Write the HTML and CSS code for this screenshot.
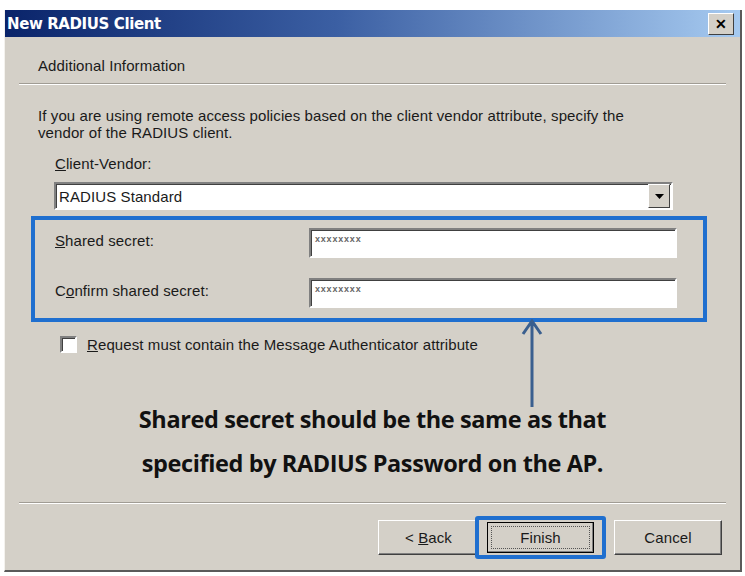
FILE: index.html
```html
<!DOCTYPE html>
<html lang="en">
<head>
    <meta charset="UTF-8">
    <title>New RADIUS Client</title>
    <link rel="stylesheet" href="styles.css">
</head>
<body>

<div class="window">
    <!-- title bar -->
    <div class="titlebar">
        <span class="title">New RADIUS Client</span>
        <span class="close-btn">&#x2715;</span>
    </div>

    <div class="page-head">
        <span>Additional Information</span>
    </div>
    <div class="sep"></div>

    <div class="content">
        <p class="intro">If you are using remote access policies based on the client vendor attribute, specify the vendor of the RADIUS client.</p>

        <div class="field-label"><u>C</u>lient-Vendor:</div>
        <div class="combo">
            <span class="combo-text">RADIUS Standard</span>
            <span class="combo-btn"><svg width="9" height="5" viewBox="0 0 9 5"><path d="M0 0h9L4.5 5z" fill="#000"/></svg></span>
        </div>

        <div class="secret-box">
            <div class="secret-row">
                <span class="secret-label"><u>S</u>hared secret:</span>
                <span class="edit"><span class="dots">xxxxxxxx</span></span>
            </div>
            <div class="secret-row">
                <span class="secret-label">C<u>o</u>nfirm shared secret:</span>
                <span class="edit"><span class="dots">xxxxxxxx</span></span>
            </div>
        </div>

        <div class="check-row">
            <span class="checkbox"></span>
            <span><u>R</u>equest must contain the Message Authenticator attribute</span>
            <svg class="arrow" width="24" height="88" viewBox="0 0 24 88">
                <path d="M12 2V88M3 15L12 2L21 15" fill="none" stroke="#3a5f8f" stroke-width="3"/>
            </svg>
        </div>

        <div class="note">
            <p>Shared secret should be the same as that</p>
            <p>specified by RADIUS Password on the AP.</p>
        </div>
    </div>

    <div class="sep"></div>

    <div class="buttons">
        <span class="btn"><span>&lt; <u>B</u>ack</span></span>
        <span class="btn-hl"><span class="btn btn-default">Finish</span></span>
        <span class="btn btn-cancel">Cancel</span>
    </div>
</div>

</body>
</html>
```

FILE: styles.css
```css
/* ========= base ========= */
body {
  margin: 0;
  background: #ffffff;
  font-family: "Liberation Sans", Arial, sans-serif;
  font-size: 15px;
  letter-spacing: 0.1px;
  color: #1a1a1a;
}

/* ========= window ========= */
.window {
  margin: 10px 3px 0 4px;
  height: 562px;
  box-sizing: border-box;
  background: #d4d0c8;
  border-left: 1px solid #f4f2ee;
  border-right: 2px solid #5a5a5a;
  border-bottom: 2px solid #5a5a5a;
  display: flex;
  flex-direction: column;
}

.titlebar {
  height: 27px;
  background: linear-gradient(to right, #0a246a 0%, #3b5fa3 45%, #a6caf0 100%);
  display: flex;
  align-items: center;
  justify-content: space-between;
  padding: 0 6px 0 2px;
}

.title {
  color: #fff;
  font-family: "DejaVu Sans", sans-serif;
  font-weight: bold;
  font-size: 15px;
  letter-spacing: -0.4px;
}

.close-btn {
  width: 24px;
  height: 20px;
  background: #d4d0c8;
  border: 1px solid;
  border-color: #fff #404040 #404040 #fff;
  font-size: 14px;
  font-weight: bold;
  line-height: 20px;
  text-align: center;
  color: #000;
}

.page-head {
  height: 46px;
  box-sizing: border-box;
  padding: 10px 0 0 33px;
  display: flex;
  align-items: center;
}

.sep {
  margin: 0 14px;
  border-top: 1px solid #a09c94;
  border-bottom: 1px solid #fff;
}

/* ========= content ========= */
.content {
  flex: 1;
  padding: 0 0 0 33px;
}

.intro {
  margin: 22px 0 0;
  width: 615px;
  line-height: 17px;
}

.field-label {
  margin: 14px 0 0 17px;
}

.combo {
  margin: 10px 0 0 16px;
  width: 619px;
  height: 28px;
  box-sizing: border-box;
  background: #fff;
  border: 2px solid;
  border-color: #808080 #fff #fff #808080;
  box-shadow: inset 1px 1px 0 #404040;
  display: flex;
  align-items: center;
  justify-content: space-between;
  padding-left: 3px;
}

.combo-btn {
  width: 20px;
  height: 22px;
  margin-right: 1px;
  background: #d4d0c8;
  border: 1px solid;
  border-color: #fff #404040 #404040 #fff;
  display: flex;
  align-items: center;
  justify-content: center;
}

.secret-box {
  margin: 6px 0 0 -7px;
  width: 676px;
  box-sizing: border-box;
  border: 4px solid #1f6fcf;
  padding: 8px 26px 10px 20px;
  display: flex;
  flex-direction: column;
  gap: 20px;
}

.secret-row {
  display: flex;
  align-items: center;
  justify-content: space-between;
}

.secret-label {
  margin-top: -6px;
}

.edit {
  width: 368px;
  height: 30px;
  box-sizing: border-box;
  background: #fff;
  border: 2px solid;
  border-color: #808080 #fff #fff #808080;
  box-shadow: inset 1px 1px 0 #404040;
  padding: 0 4px;
  line-height: 14px;
}

.dots {
  font-size: 9px;
  font-weight: bold;
  color: #666;
  letter-spacing: 0.8px;
}

.check-row {
  position: relative;
  margin: 14px 0 0 22px;
  display: flex;
  align-items: center;
  gap: 10px;
}

.checkbox {
  width: 13px;
  height: 13px;
  background: #fff;
  border: 2px solid;
  border-color: #808080 #fff #fff #808080;
  box-shadow: inset 1px 1px 0 #404040;
}

.arrow {
  position: absolute;
  left: 460px;
  top: -17px;
}

.note {
  margin: 44px 0 0 -33px;
  text-align: center;
  font-family: "Open Sans", "Liberation Sans", sans-serif;
  font-weight: bold;
  font-size: 23.5px;
  color: #111;
  letter-spacing: -0.4px;
}

.note p {
  margin: 0;
  line-height: 44px;
}

/* ========= buttons ========= */
.buttons {
  height: 66px;
  display: flex;
  justify-content: flex-end;
  align-items: center;
  padding-right: 18px;
}

.btn {
  width: 101px;
  height: 35px;
  box-sizing: border-box;
  background: #d4d0c8;
  border: 1px solid;
  border-color: #fff #404040 #404040 #fff;
  box-shadow: inset -1px -1px 0 #808080;
  display: flex;
  align-items: center;
  justify-content: center;
}

.btn-cancel {
  width: 108px;
}

.btn-hl {
  border: 4px solid #1f6fcf;
  border-radius: 3px;
  padding: 0 8px;
  height: 35px;
  display: flex;
  align-items: center;
  margin: 0 8px 0 -4px;
}

.btn-default {
  width: 107px;
  height: 31px;
  border: 1px solid #000;
  outline: 1px dotted #555;
  outline-offset: -5px;
}
```
